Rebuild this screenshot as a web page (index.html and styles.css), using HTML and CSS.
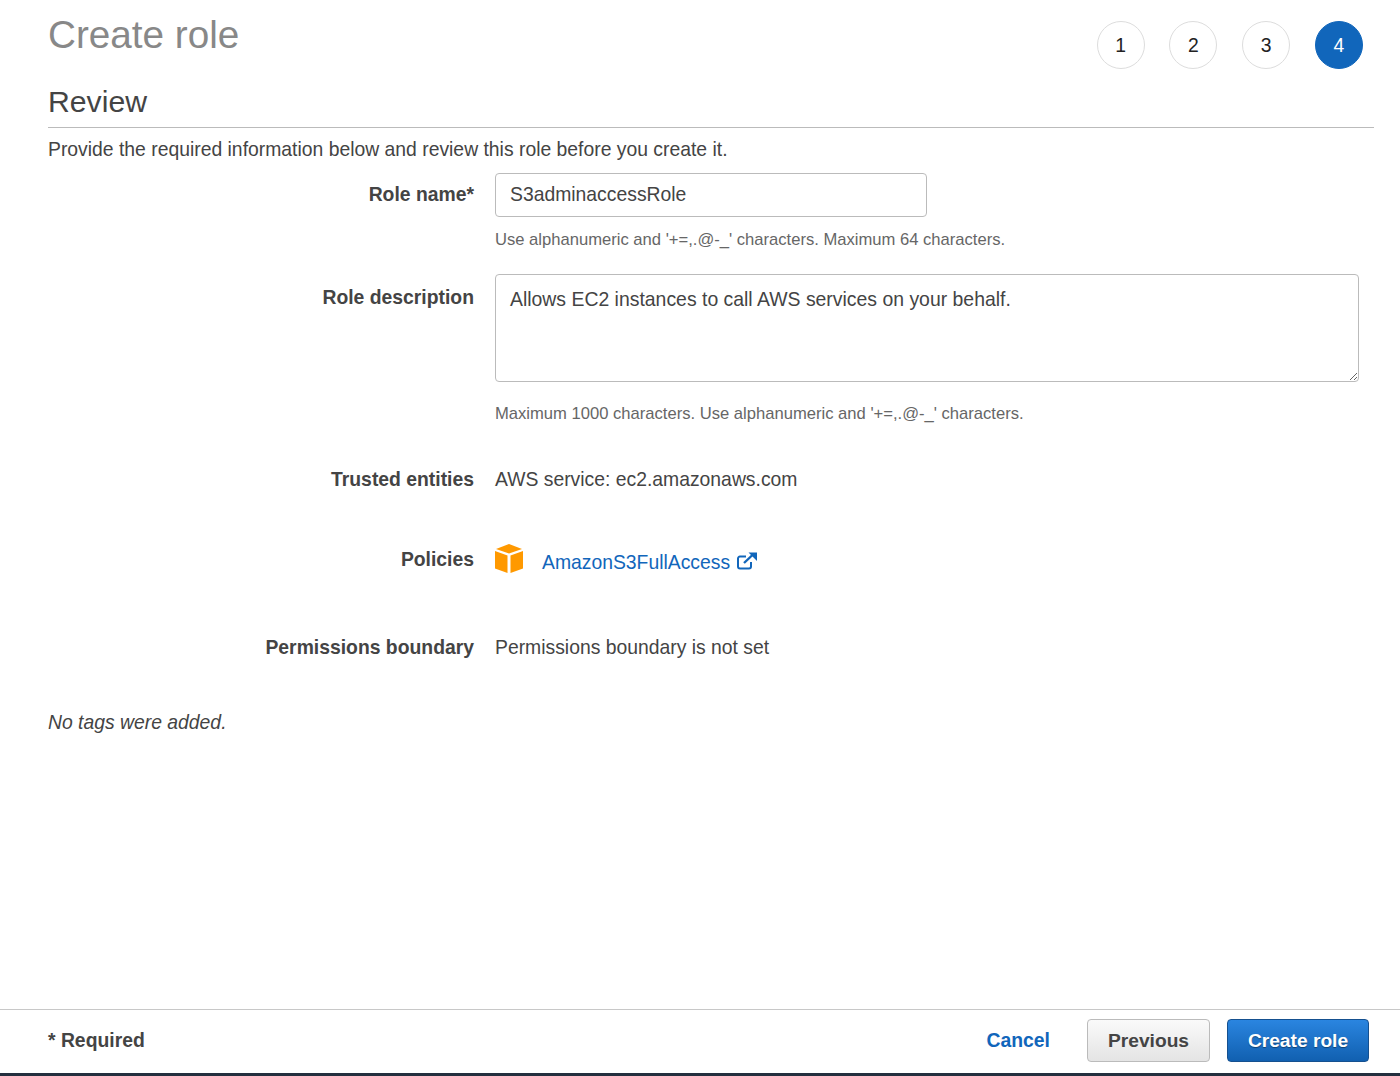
FILE: index.html
```html
<html lang="en">
<head>
    <meta charset="UTF-8">
    <meta name="viewport" content="width=device-width, initial-scale=1.0">
    <title>Create role</title>
    <link rel="stylesheet" href="styles.css">
</head>
<body>

    <main class="page">
        <div class="top">
            <h1 class="title">Create role</h1>
            <div class="steps">
                <span class="step">1</span>
                <span class="step">2</span>
                <span class="step">3</span>
                <span class="step step-on">4</span>
            </div>
        </div>

        <h2 class="section">Review</h2>
        <p class="intro">Provide the required information below and review this role before you create it.</p>

        <div class="row row-name">
            <label class="label">Role name*</label>
            <div class="value">
                <input class="field field-name" type="text" value="S3adminaccessRole">
                <p class="hint">Use alphanumeric and '+=,.@-_' characters. Maximum 64 characters.</p>
            </div>
        </div>

        <div class="row row-desc">
            <label class="label">Role description</label>
            <div class="value">
                <textarea class="field field-desc">Allows EC2 instances to call AWS services on your behalf.</textarea>
                <p class="hint">Maximum 1000 characters. Use alphanumeric and '+=,.@-_' characters.</p>
            </div>
        </div>

        <div class="row row-trusted">
            <span class="label">Trusted entities</span>
            <div class="value">AWS service: ec2.amazonaws.com</div>
        </div>

        <div class="row row-policies">
            <span class="label">Policies</span>
            <div class="value policy">
                <svg class="cube" width="28" height="30" viewBox="1 0 28 30">
                    <path fill="#ff9900" d="M15 1 L28 6 L15 10.500 L2 6 Z"/>
                    <path fill="#ff9900" d="M1 8 L13.500 12.500 V30 L1 25.500 Z"/>
                    <path fill="#ff9900" d="M29 8 L16.500 12.500 V30 L29 25.500 Z"/>
                </svg>
                <a class="link" href="#">AmazonS3FullAccess</a>
                <svg class="ext" width="22" height="18" viewBox="0 0 22 18">
                    <path fill="none" stroke="#1166bb" stroke-width="2" d="M15 10 V14.500 A2 2 0 0 1 13 16.500 H4 A2 2 0 0 1 2 14.500 V6.500 A2 2 0 0 1 4 4.500 H10"/>
                    <path fill="none" stroke="#1166bb" stroke-width="2.400" d="M8 11 L17 2.500"/>
                    <path fill="#1166bb" d="M12.500 0.500 H21 V9 Z"/>
                </svg>
            </div>
        </div>

        <div class="row row-boundary">
            <span class="label">Permissions boundary</span>
            <div class="value">Permissions boundary is not set</div>
        </div>

        <p class="no-tags">No tags were added.</p>
    </main>

    <footer class="foot">
        <span class="required">* Required</span>
        <div class="actions">
            <a class="cancel" href="#">Cancel</a>
            <button class="btn btn-prev">Previous</button>
            <button class="btn btn-main">Create role</button>
        </div>
    </footer>

</body>
</html>
```

FILE: styles.css
```css
*{
    margin:0;
    padding:0;
    box-sizing:border-box;
}

body{
    font-family:"Liberation Sans", Arial, sans-serif;
    font-size:19.350px;
    color:#444;
    background:#fff;
    height:100vh;
    display:flex;
    flex-direction:column;
    overflow:hidden;
}

.page{
    flex:1;
    padding:0 26px 0 48px;
}

.top{
    display:flex;
    justify-content:space-between;
    height:84px;
    padding-right:11px;
}

.title{
    font-size:38.700px;
    font-weight:normal;
    color:#888;
    line-height:44px;
    margin-top:13px;
}

.steps{
    display:flex;
    gap:24.800px;
    padding-top:21px;
}

.step{
    width:48px;
    height:48px;
    border:1px solid #ddd;
    border-radius:50%;
    color:#222;
    font-size:19.350px;
    display:flex;
    align-items:center;
    justify-content:center;
}

.step-on{
    background:#1166bb;
    border-color:#1166bb;
    color:#fff;
}

.section{
    font-size:30.200px;
    font-weight:normal;
    color:#444;
    line-height:35px;
    height:44px;
    border-bottom:1px solid #bbb;
}

.intro{
    line-height:24px;
    margin-top:9px;
}

.row{
    display:flex;
}

.label{
    width:426px;
    margin-right:21px;
    text-align:right;
    font-weight:bold;
    line-height:24px;
    flex-shrink:0;
}

.value{
    line-height:24px;
}

.row-name{
    margin-top:12px;
}

.row-name .label{
    padding-top:9px;
}

.row-desc{
    margin-top:24px;
}

.row-desc .label{
    padding-top:11px;
}

.row-trusted{
    margin-top:43px;
}

.row-policies{
    margin-top:52px;
}

.row-policies .label{
    padding-top:4px;
}

.row-boundary{
    margin-top:62px;
}

.field{
    display:block;
    font-family:inherit;
    font-size:19.350px;
    color:#444;
    border:1px solid #bbb;
    border-radius:4px;
    padding:0 14px;
    outline:none;
}

.field-name{
    width:432px;
    height:44px;
    padding-bottom:2px;
}

.field-desc{
    width:864px;
    height:108px;
    padding-top:12px;
    line-height:24px;
    font-size:19.420px;
}

.hint{
    font-size:16.600px;
    color:#666;
    line-height:20px;
    margin-top:13px;
}

.field-desc + .hint{
    margin-top:22px;
}

.policy{
    display:flex;
    align-items:center;
    height:30px;
}

.cube{
    margin-right:19px;
}

.link{
    color:#1166bb;
    text-decoration:none;
    margin-top:8px;
}

.ext{
    margin-left:6px;
    margin-top:6px;
}

.no-tags{
    font-style:italic;
    line-height:24px;
    margin-top:51px;
}

.foot{
    height:67px;
    border-top:1px solid #c8c8c8;
    border-bottom:3px solid #232f3e;
    padding:0 31px 2px 48px;
    display:flex;
    justify-content:space-between;
    align-items:center;
}

.required{
    font-weight:bold;
}

.actions{
    display:flex;
    align-items:center;
}

.cancel{
    color:#1166bb;
    font-weight:bold;
    text-decoration:none;
    margin-right:37px;
}

.btn{
    font-family:inherit;
    font-size:19.200px;
    font-weight:bold;
    height:43px;
    border-radius:4px;
}

.btn-prev{
    width:123px;
    margin-right:17px;
    color:#444;
    border:1px solid #bbb;
    background:linear-gradient(#fafafa, #e4e4e4);
}

.btn-main{
    width:142px;
    color:#fff;
    border:1px solid #15508f;
    background:linear-gradient(#2a85e0, #1160b0);
    text-shadow:0 1px 1px rgba(0,0,0,.4);
}
```
